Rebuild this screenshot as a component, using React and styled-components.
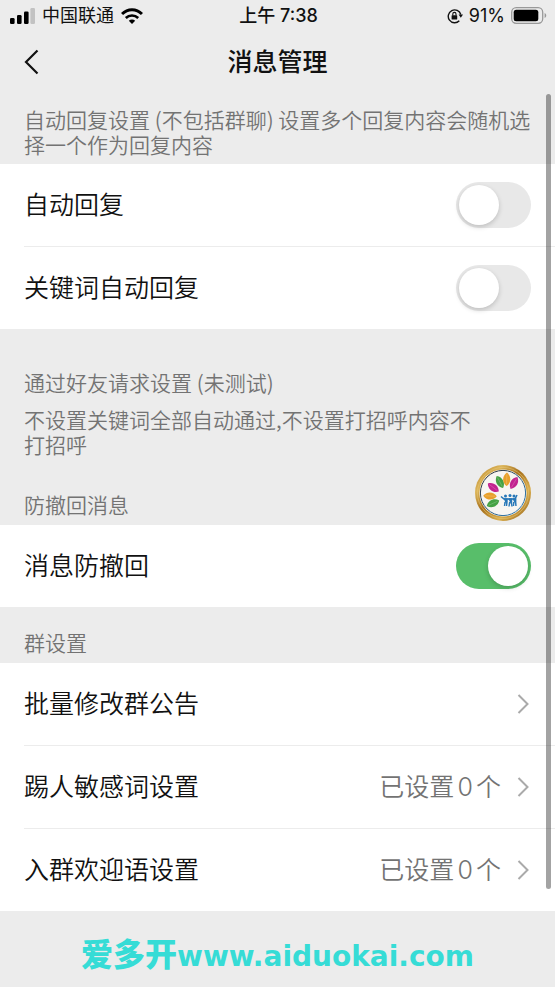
import React, { useState } from "react";
import styled, { createGlobalStyle } from "styled-components";

function App() {
  const [reply, setReply] = useState(false);
  const [keyword, setKeyword] = useState(false);
  const [recall, setRecall] = useState(true);

  return (
    <Page>
      <GlobalStyle />

      <StatusBar>
        <Carrier>
          <SignalIcon />
          中国联通
          <WifiIcon />
        </Carrier>
        <Time>上午 7:38</Time>
        <Power>
          <LockIcon />
          91%
          <BatteryIcon />
        </Power>
      </StatusBar>

      <Header>
        <Back type="button" aria-label="返回">
          <svg width="15" height="26" viewBox="0 0 15 26" fill="none" stroke="#111" strokeWidth="2.2">
            <path d="M13.5 1.5L2 13l11.5 11.5" />
          </svg>
        </Back>
        <Title>消息管理</Title>
      </Header>

      <main>
        <Note>自动回复设置 (不包括群聊) 设置多个回复内容会随机选择一个作为回复内容</Note>
        <List>
          <SwitchRow label="自动回复" checked={reply} onChange={setReply} />
          <SwitchRow label="关键词自动回复" checked={keyword} onChange={setKeyword} />
        </List>

        <Friends>
          <Caption>通过好友请求设置 (未测试)</Caption>
          <Hint>不设置关键词全部自动通过,不设置打招呼内容不打招呼</Hint>
        </Friends>

        <Caption>防撤回消息</Caption>
        <List>
          <SwitchRow label="消息防撤回" checked={recall} onChange={setRecall} />
        </List>

        <GroupHead>
          <Caption>群设置</Caption>
        </GroupHead>
        <List>
          <LinkRow label="批量修改群公告" />
          <LinkRow label="踢人敏感词设置" value="已设置0个" />
          <LinkRow label="入群欢迎语设置" value="已设置0个" />
        </List>
      </main>

      <Site>爱多开<b>www.aiduokai.com</b></Site>

      <Floating type="button" aria-label="助手">
        <BadgeIcon />
      </Floating>
      <ScrollThumb />
    </Page>
  );
}

export default App;

function SwitchRow({ label, checked, onChange }) {
  return (
    <Item>
      <SwitchLabel>
        {label}
        <Switch
          type="checkbox"
          role="switch"
          checked={checked}
          onChange={(e) => onChange(e.target.checked)}
        />
      </SwitchLabel>
    </Item>
  );
}

function LinkRow({ label, value }) {
  return (
    <Item>
      <RowLink href="#">
        {label}
        <Value>
          {value}
          <svg width="12" height="20" viewBox="0 0 12 20" fill="none" stroke="#aaa" strokeWidth="2">
            <path d="M1.5 1L10.5 10l-9 9" />
          </svg>
        </Value>
      </RowLink>
    </Item>
  );
}

function SignalIcon() {
  return (
    <svg width="25" height="16" viewBox="0 0 25 16">
      <rect x="0" y="10" width="4.6" height="6" rx="1.3" />
      <rect x="7" y="7" width="4.6" height="9" rx="1.3" />
      <rect x="14" y="3.5" width="4.6" height="12.5" rx="1.3" />
      <rect x="20.4" y="0" width="4.6" height="16" rx="1.3" fill="#c2c2c2" />
    </svg>
  );
}

function WifiIcon() {
  return (
    <svg width="22" height="16" viewBox="0 0 22 16" fill="none" stroke="#000" strokeWidth="3">
      <path d="M1 6C6.600.200 15.400.200 21 6" />
      <path d="M4.800 10c3.500-3.400 8.900-3.400 12.400 0" strokeWidth="2.6" />
      <path d="M11 16l-3.200-3.200c1.800-1.600 4.600-1.600 6.400 0z" fill="#000" stroke="none" />
    </svg>
  );
}

function LockIcon() {
  return (
    <svg width="16" height="16" viewBox="0 0 16 16" fill="none" stroke="#111" strokeWidth="1.4">
      <path d="M12.3 12.7A6.4 6.4 0 1 1 13.8 6.5" />
      <path d="M11.6 6.5h4.4l-2.2 3.3z" fill="#111" stroke="none" />
      <rect x="4.6" y="7.2" width="5.6" height="4.3" rx=".6" fill="#111" stroke="none" />
      <path d="M5.8 7.5V6a1.6 1.6 0 0 1 3.2 0v1.5" strokeWidth="1.1" />
    </svg>
  );
}

function BatteryIcon() {
  return (
    <svg width="36" height="17" viewBox="0 0 36 17">
      <rect x=".7" y=".7" width="31" height="15.6" rx="4.5" fill="none" stroke="#999" strokeWidth="1.3" />
      <rect x="2.7" y="2.7" width="24.6" height="11.6" rx="2.5" />
      <path d="M33.6 6c2.2.8 2.2 4.2 0 5z" fill="#999" />
    </svg>
  );
}

function BadgeIcon() {
  return (
    <svg width="56" height="56" viewBox="0 0 56 56">
      <defs>
        <linearGradient id="gold" x1="0" y1="0" x2="1" y2="1">
          <stop offset="0" stopColor="#b8832a" />
          <stop offset=".25" stopColor="#dcb55a" />
          <stop offset=".45" stopColor="#a56f1c" />
          <stop offset=".7" stopColor="#d9ad4c" />
          <stop offset="1" stopColor="#8f5c16" />
        </linearGradient>
        <linearGradient id="ring" x1="0" y1="0" x2="1" y2="1">
          <stop offset="0" stopColor="#2c2626" />
          <stop offset="1" stopColor="#2f86c4" />
        </linearGradient>
      </defs>
      <circle cx="28" cy="28" r="28" fill="url(#gold)" />
      <circle cx="28" cy="28" r="25.6" fill="none" stroke="#e6c675" strokeWidth=".6" />
      <circle cx="28" cy="28" r="23.6" fill="#f7f5f2" />
      <circle cx="28" cy="28" r="22.6" fill="none" stroke="url(#ring)" strokeWidth="1" />
      <Petal cx={18} cy={38.3} angle={-24} color="#45a244" />
      <Petal cx={15} cy={31} angle={3} color="#e8a02c" />
      <Petal cx={18.3} cy={22.5} angle={37} color="#c3238f" />
      <Petal cx={24.9} cy={17} angle={62} color="#45a244" />
      <Petal cx={31.7} cy={14.3} angle={92} color="#e8a02c" />
      <Petal cx={39} cy={18} angle={-60} color="#c3238f" />
      <g fill="#2878b8" stroke="#2878b8">
        <circle cx="30.500" cy="31" r="1.5" stroke="none" />
        <circle cx="35" cy="30.5" r="1.5" stroke="none" />
        <circle cx="39" cy="31" r="1.5" stroke="none" />
        <path d="M26 31.500l3 2.500h11l2-4" fill="none" strokeWidth="1.6" />
        <path d="M29 34h3v3l-.5 4M30 37l-.5 4M33.500 34h3v4l.5 3.500M34.700 37l-.7 4.500M37.700 34h3v3l.300 4M38.700 37l-.200 4" strokeWidth="1.4" />
      </g>
    </svg>
  );
}

function Petal({ cx, cy, angle, color }) {
  return (
    <g transform={`translate(${cx} ${cy}) rotate(${angle})`}>
      <path d="M-6.8 0C-3-5 3.500-4.500 6.800 0C3.500 4.500-3 5-6.800 0z" fill={color} />
      <path d="M-5 0H5" stroke="#fff" strokeOpacity=".25" strokeWidth=".7" />
    </g>
  );
}

const GlobalStyle = createGlobalStyle`
* {
  box-sizing: border-box;
}
body {
  margin: 0;
  background: #ececec;
  color: #111;
  font-family: Inter, "Noto Sans CJK SC", sans-serif;
}
button {
  padding: 0;
  border: 0;
  background: none;
  cursor: pointer;
}
svg {
  display: block;
  flex-shrink: 0;
}`;

const Page = styled.div`
position: relative;
min-height: 100vh;
background: #ececec;`;

const StatusBar = styled.div`
display: grid;
grid-template-columns: 1fr auto 1fr;
align-items: center;
height: 31px;
padding: 0 8px 0 10px;
font-size: 18px;
line-height: 31px;`;

const Carrier = styled.div`
display: flex;
align-items: center;
gap: 7px;`;

const Time = styled.div`
font-weight: 500;`;

const Power = styled.div`
display: flex;
align-items: center;
justify-content: flex-end;
gap: 6px;`;

const Header = styled.header`
display: grid;
grid-template-columns: 1fr auto 1fr;
align-items: center;
height: 62px;
padding: 0 24px;`;

const Back = styled.button`
justify-self: start;`;

const Title = styled.h1`
margin: 0;
font-size: 25px;
font-weight: 500;
line-height: 36px;`;

const Note = styled.p`
margin: 0;
padding: 14px 16px 7px 24px;
font-family: "Noto Sans CJK SC", sans-serif;
font-size: 21px;
font-weight: 350;
line-height: 25px;
color: #737373;`;

const Caption = styled.h2`
margin: 0;
padding: 0 24px 8px;
font-family: "Noto Sans CJK SC", sans-serif;
font-size: 21px;
font-weight: 350;
line-height: 25px;
color: #737373;`;

const Friends = styled.section`
padding-top: 41px;
padding-bottom: 35px;`;

const Hint = styled.p`
margin: 0;
padding: 4px 72px 0 24px;
font-family: "Noto Sans CJK SC", sans-serif;
font-size: 21px;
font-weight: 350;
line-height: 25px;
color: #737373;`;

const GroupHead = styled.div`
padding-top: 23px;`;

const List = styled.ul`
margin: 0;
padding: 0;
list-style: none;
background: #fff;`;

const Item = styled.li`
padding-left: 24px;

& + & > * {
  min-height: 83px;
  border-top: 1px solid #ececec;
}`;

const SwitchLabel = styled.label`
display: flex;
align-items: center;
justify-content: space-between;
min-height: 82px;
padding-right: 24px;
font-size: 25px;
font-weight: 350;
line-height: 36px;
cursor: pointer;`;

const RowLink = styled.a`
display: flex;
align-items: center;
justify-content: space-between;
min-height: 82px;
padding-right: 26px;
font-size: 25px;
font-weight: 350;
line-height: 36px;
color: inherit;
text-decoration: none;`;

const Value = styled.span`
display: flex;
align-items: center;
gap: 16px;
color: #737373;
text-autospace: normal;`;

const Switch = styled.input`
appearance: none;
flex-shrink: 0;
width: 75px;
height: 46px;
margin: 0;
padding: 3px;
border-radius: 23px;
background: ${(p) => (p.checked ? "#58be6a" : "#e8e8e8")};
cursor: pointer;

&::before {
  content: "";
  display: block;
  width: 40px;
  height: 40px;
  margin-left: ${(p) => (p.checked ? "29px" : "0")};
  border-radius: 50%;
  background: #fff;
  box-shadow: 0 2px 5px rgba(0, 0, 0, 0.18);
}`;

const Site = styled.p`
margin: 0;
padding: 21px 0 8px;
text-align: center;
font-family: "Noto Sans CJK SC", sans-serif;
font-size: 32px;
font-weight: 900;
line-height: 40px;
color: #36dcd6;

b {
  font-family: "DejaVu Sans", sans-serif;
  font-size: 28px;
  font-weight: 700;
}`;

const Floating = styled.button`
position: absolute;
top: 465px;
right: 24px;`;

const ScrollThumb = styled.div`
position: absolute;
top: 94px;
right: 4px;
bottom: 98px;
width: 5px;
border-radius: 3px;
background: rgba(0, 0, 0, 0.36);`;
